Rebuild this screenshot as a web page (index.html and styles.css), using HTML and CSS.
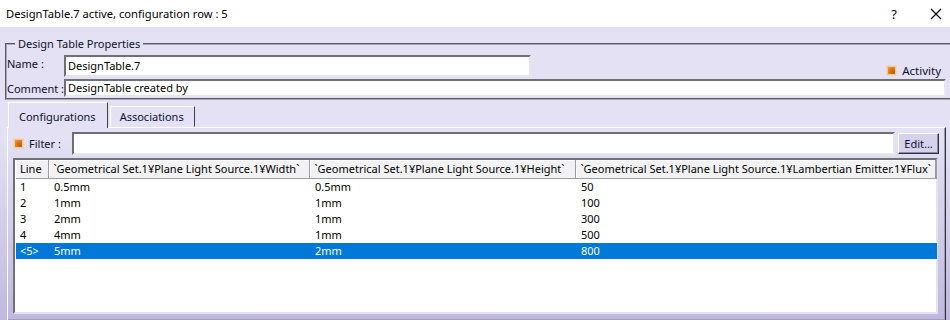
FILE: index.html
```html
<!DOCTYPE html>
<html lang="en">
<head>
    <meta charset="UTF-8">
    <title>DesignTable.7 active, configuration row : 5</title>
    <link rel="stylesheet" href="styles.css">
</head>
<body>
    <div class="titlebar">
        <span class="title">DesignTable.7 active, configuration row : 5</span>
        <span class="help">?</span>
        <svg class="close" width="12" height="12" viewBox="0 0 12 12">
            <path d="M1 1 L11 11 M11 1 L1 11" stroke="#000" stroke-width="1.1" fill="none"/>
        </svg>
    </div>

    <div class="main">
        <fieldset class="group">
            <legend>Design Table Properties</legend>
            <div class="prop-row name-row">
                <label class="prop-label">Name :</label>
                <div class="input name-input">DesignTable.7</div>
                <div class="activity">
                    <span class="check"></span>
                    Activity
                </div>
            </div>
            <div class="prop-row comment-row">
                <label class="prop-label">Comment :</label>
                <div class="input comment-input">DesignTable created by</div>
            </div>
        </fieldset>

        <div class="tabs">
            <div class="tab active">Configurations</div>
            <div class="tab">Associations</div>
        </div>

        <div class="panel">
            <div class="filter-row">
                <span class="check"></span>
                <span class="filter-label">Filter :</span>
                <div class="input filter-input"></div>
                <button class="edit-btn">Edit...</button>
            </div>

            <div class="grid">
                <table class="configs">
                    <colgroup>
                        <col style="width:32px">
                        <col style="width:261px">
                        <col style="width:266px">
                        <col style="width:360px">
                        <col>
                    </colgroup>
                    <thead>
                        <tr>
                            <th>Line</th>
                            <th>`Geometrical Set.1¥Plane Light Source.1¥Width`</th>
                            <th>`Geometrical Set.1¥Plane Light Source.1¥Height`</th>
                            <th>`Geometrical Set.1¥Plane Light Source.1¥Lambertian Emitter.1¥Flux`</th>
                            <th class="filler"></th>
                        </tr>
                    </thead>
                    <tbody>
                        <tr><td>1</td><td>0.5mm</td><td>0.5mm</td><td>50</td><td></td></tr>
                        <tr><td>2</td><td>1mm</td><td>1mm</td><td>100</td><td></td></tr>
                        <tr><td>3</td><td>2mm</td><td>1mm</td><td>300</td><td></td></tr>
                        <tr><td>4</td><td>4mm</td><td>1mm</td><td>500</td><td></td></tr>
                        <tr class="selected"><td>&lt;5&gt;</td><td>5mm</td><td>2mm</td><td>800</td><td></td></tr>
                    </tbody>
                </table>
            </div>
        </div>
    </div>
</body>
</html>
```

FILE: styles.css
```css
* {
    margin: 0;
    padding: 0;
    box-sizing: border-box;
}

body {
    width: 950px;
    height: 320px;
    overflow: hidden;
    font-family: "Noto Sans", sans-serif;
    font-size: 11px;
    color: #000;
    background-color: #e3e1f3;
}

.titlebar {
    height: 27px;
    background-color: #fff;
    display: flex;
    align-items: center;
    padding: 0 8px 0 6px;
}

.title {
    flex: 1;
    font-size: 11.2px;
}

.help {
    font-size: 13px;
    margin-right: 33px;
}

.close {
    display: block;
}

.main {
    height: 293px;
    padding: 9px 0 0 0;
    background: linear-gradient(#e3e1f3 0, #e3e1f3 110px, #c0b8e1 100%);
}

/* Design Table Properties */
.group {
    margin-left: 5px;
    margin-right: -10px;
    border: 2px groove #a8a6b8;
    padding: 3px 0 1px 0;
    height: 64px;
    color: #101030;
}

.group legend {
    margin-left: 8px;
    padding: 0 3px;
    line-height: 16px;
}

.prop-row {
    display: flex;
    align-items: center;
}

.prop-label {
    width: 57px;
    flex-shrink: 0;
    white-space: nowrap;
}

.name-row {
    height: 22px;
}

.name-row .prop-label {
    align-self: flex-start;
    margin-top: 1px;
}

.comment-row {
    margin-top: 2px;
    height: 18px;
}

.input {
    background-color: #fff;
    border: 2px solid;
    border-color: #6e6e78 #e6e6ee #e6e6ee #6e6e78;
    padding: 0 2px;
    line-height: 15px;
    color: #000;
}

.name-input {
    width: 467px;
    height: 22px;
    line-height: 18px;
}

.comment-input {
    width: 882px;
    height: 18px;
    line-height: 14px;
}

.activity {
    margin-left: auto;
    margin-right: 17px;
    margin-top: 8px;
    display: flex;
    align-items: center;
    gap: 5px;
    font-size: 11.5px;
}

.check {
    display: inline-block;
    flex-shrink: 0;
    width: 11px;
    height: 11px;
    border: 1px solid #e8d8c4;
    background: radial-gradient(circle at 70% 70%, #b85a10 0, #e07a20 45%, #f4b070 100%);
    box-shadow: inset 0 0 0 1px #f0c890;
}

/* Tabs */
.tabs {
    display: flex;
    align-items: flex-end;
    height: 26px;
    margin-top: 1px;
    padding-left: 7px;
}

.tab {
    height: 21px;
    padding: 0 10px 0 9px;
    line-height: 20px;
    color: #101030;
    border: 1px solid;
    border-color: #fff #404048 transparent #fff;
    margin-left: 2px;
}

.tab.active {
    height: 26px;
    line-height: 28px;
    padding: 0 11px 0 10px;
    margin-left: 1px;
    background-color: #e3e1f3;
    position: relative;
    z-index: 1;
    margin-bottom: -1px;
    border-bottom: none;
}

.panel {
    margin-left: 7px;
    margin-right: 4px;
    height: 194px;
    border: 1px solid;
    border-color: #fff #303038 #303038 #fff;
    box-shadow: inset -1px -1px 0 #a0a0b0;
    padding: 4px 6px 0 5px;
}

.filter-row {
    display: flex;
    align-items: center;
    height: 23px;
}

.filter-label {
    margin-left: 5px;
    width: 43px;
    color: #101030;
}

.filter-input {
    width: 826px;
    height: 23px;
}

.edit-btn {
    margin-left: 3px;
    width: 41px;
    height: 21px;
    font-family: inherit;
    font-size: 11px;
    color: #101030;
    background-color: #d6d2ec;
    border: 1px solid;
    border-color: #fff #303038 #303038 #fff;
    box-shadow: inset -1px -1px 0 #8c88a8;
}

/* Configurations table */
.grid {
    margin-top: 3px;
    width: 925px;
    height: 156px;
    background-color: #fff;
    border: 2px solid;
    border-color: #707078 #e4e4e8 #e4e4e8 #707078;
    padding: 0 0 0 1px;
}

.configs {
    table-layout: fixed;
    border-collapse: collapse;
    width: 921px;
}

.configs th {
    height: 18px;
    font-weight: normal;
    text-align: left;
    white-space: nowrap;
    overflow: hidden;
    padding: 0 0 0 5px;
    background-color: #f2f2f4;
    border-right: 1px solid #9c9ca4;
    border-bottom: 1px solid #9c9ca4;
    box-shadow: inset 1px 1px 0 #fff;
}

.configs th:first-child {
    padding-left: 4px;
}

.configs td {
    height: 16px;
    line-height: 16px;
    padding: 0 0 0 6px;
    white-space: nowrap;
}

.configs td:first-child {
    padding-left: 4px;
}

.configs tr.selected td {
    background-color: #0078d7;
    color: #fff;
}
```
